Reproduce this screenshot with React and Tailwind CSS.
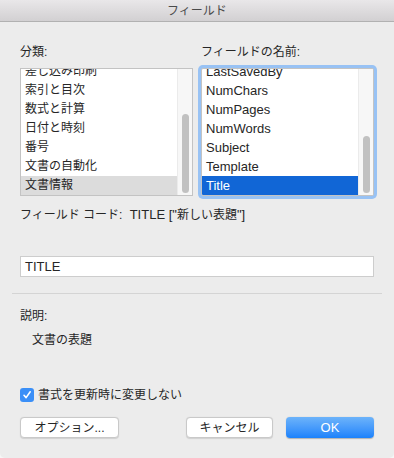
import React from "react";

const leftItems = ["差し込み印刷", "索引と目次", "数式と計算", "日付と時刻", "番号", "文書の自動化", "文書情報"];
const rightItems = ["LastSavedBy", "NumChars", "NumPages", "NumWords", "Subject", "Template", "Title"];

function ListBox({ items, selected, selectedClass, thumbClass, focused, textClass }) {
  return (
    <div
      className={
        "h-[128px] w-full border border-[#c3c3c3] bg-white flex overflow-hidden " +
        (focused ? "shadow-[0_0_0_3px_#98c2f4] rounded-[2px] border-[#a9c8ef]" : "")
      }
    >
      <div className="flex-1 flex flex-col justify-end overflow-hidden">
        {items.map((it) => (
          <div
            key={it}
            className={
              "h-[19px] shrink-0 pl-[4px] leading-[19px] " +
              textClass +
              " " +
              (it === selected ? selectedClass : "text-[#262626]")
            }
          >
            {it}
          </div>
        ))}
      </div>
      <div className="w-[15px] shrink-0 bg-[#f7f7f7] border-l border-[#ebebeb] flex flex-col justify-end items-center pb-[2px]">
        <div className={"w-[7px] rounded-full bg-[#c1c1c1] " + thumbClass} />
      </div>
    </div>
  );
}

function Button({ children, primary, className }) {
  return (
    <div
      className={
        "h-[21px] rounded-[4px] flex items-center justify-center leading-none " +
        (primary
          ? "bg-gradient-to-b from-[#6cb3fa] to-[#1a82fb] text-white shadow-[0_0.5px_1px_rgba(0,0,0,0.25)] "
          : "bg-white text-[#262626] border border-[#c9c9c9] shadow-[0_0.5px_1px_rgba(0,0,0,0.12)] ") +
        className
      }
    >
      {children}
    </div>
  );
}

export default function App() {
  return (
    <div
      className="w-[394px] h-[458px] bg-[#f6f6f6]"
      style={{ fontFamily: '"Liberation Sans", "Noto Sans CJK JP", sans-serif' }}
    >
      <div className="w-full h-full bg-[#ececec] rounded-b-[5px] flex flex-col overflow-hidden">
        <div className="h-[22px] shrink-0 bg-gradient-to-b from-[#e9e7e9] to-[#d2d0d2] border-b border-[#b1b1b1] flex items-center justify-center text-[12px] text-[#4a4a4a]">
          フィールド
        </div>
        <div className="px-[20px] flex flex-col">
          <div className="mt-[22px] flex gap-[8px]">
            <div className="w-[173px] flex flex-col">
              <div className="h-[16px] leading-[16px] text-[12px] text-[#262626]">分類:</div>
              <div className="mt-[8px]">
                <ListBox
                  items={leftItems}
                  selected="文書情報"
                  selectedClass="bg-[#dcdcdc] text-[#262626]"
                  thumbClass="h-[79px]"
                  textClass="text-[12px]"
                />
              </div>
            </div>
            <div className="w-[173px] flex flex-col">
              <div className="h-[16px] leading-[16px] text-[12px] text-[#262626]">フィールドの名前:</div>
              <div className="mt-[8px]">
                <ListBox
                  items={rightItems}
                  selected="Title"
                  selectedClass="bg-[#1166d6] text-white"
                  thumbClass="h-[57px]"
                  textClass="text-[13px]"
                  focused
                />
              </div>
            </div>
          </div>
          <div className="mt-[11px] h-[16px] leading-[16px] text-[13px] text-[#262626] whitespace-pre">
            <span className="text-[12px]">フィールド コード:</span>
            {"  TITLE [\""}
            <span className="text-[12px]">新しい表題</span>
            {"\"]"}
          </div>
          <div className="mt-[33px] h-[21px] w-[354px] bg-white border border-[#cdcdcd] pl-[4px] flex items-center text-[13px] text-[#262626]">
            TITLE
          </div>
          <div className="mt-[16px] -mx-[8px] h-px bg-[#d4d4d4]" />
          <div className="mt-[14px] h-[16px] leading-[16px] text-[12px] text-[#262626]">説明:</div>
          <div className="mt-[8px] ml-[12px] h-[16px] leading-[16px] text-[12px] text-[#262626]">文書の表題</div>
          <div className="mt-[39px] h-[16px] flex items-center gap-[4px]">
            <div className="w-[14px] h-[14px] rounded-[3px] bg-[#3b8ff7] flex items-center justify-center">
              <svg width="10" height="10" viewBox="0 0 10 10">
                <path d="M2 5.3 L4.1 7.6 L8.2 1.8" fill="none" stroke="white" strokeWidth="1.6" strokeLinecap="round" strokeLinejoin="round" />
              </svg>
            </div>
            <span className="text-[12px] leading-[16px] text-[#262626]">書式を更新時に変更しない</span>
          </div>
          <div className="mt-[14px] flex items-center">
            <Button className="w-[99px] text-[12px]">オプション...</Button>
            <div className="flex-1" />
            <Button className="w-[87px] text-[12px]">キャンセル</Button>
            <Button primary className="w-[88px] ml-[13px] text-[13px]">OK</Button>
          </div>
        </div>
      </div>
    </div>
  );
}
